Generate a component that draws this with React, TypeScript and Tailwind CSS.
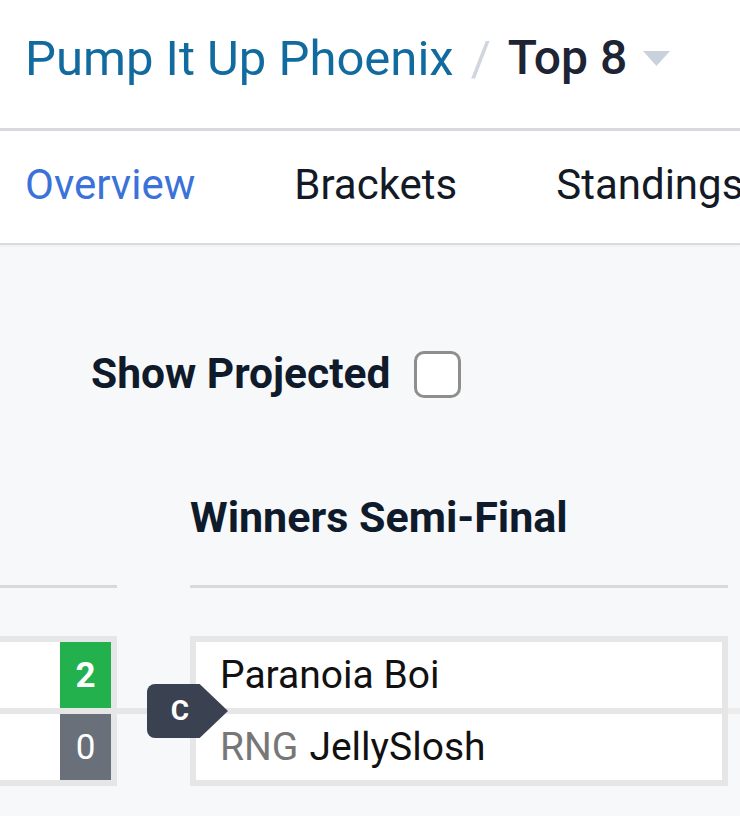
import React from "react";

const TABS = ["Overview", "Brackets", "Standings"];

function ScoreRow({ score, win }: { score: number; win: boolean }) {
  return (
    <div className="flex h-[66px]">
      <div className="flex-1 bg-white" />
      <div
        className={`w-[51px] flex items-center justify-center text-white text-[35px] leading-none ${
          win ? "bg-[#22b14c] font-bold" : "bg-[#6a707a]"
        }`}
      >
        {score}
      </div>
    </div>
  );
}

export default function App() {
  return (
    <div className="w-[740px] h-[816px] overflow-hidden bg-[#f7f8fa] font-['Roboto',sans-serif] antialiased">
      <header className="h-[131px] bg-white border-b-[3px] border-[#d7d9dc] flex items-center pl-[25px] pb-[12px] whitespace-nowrap">
        <span className="text-[49px] leading-none text-[#126b9f]">Pump It Up Phoenix</span>
        <span className="text-[49px] leading-none text-[#cfd6df] mx-[17px]">/</span>
        <span className="text-[48px] leading-none font-medium text-[#1e2433]">Top 8</span>
        <svg width="27" height="15" viewBox="0 0 27 15" className="ml-[16px]">
          <path d="M0 0 H27 L13.5 15 Z" fill="#c9d1dd" />
        </svg>
      </header>

      <nav className="h-[114px] bg-white border-b-[2px] border-[#d9dbde] shadow-[0_1px_2px_rgba(0,0,0,0.05)] flex items-center pl-[25px] pb-[5px] gap-[99px] whitespace-nowrap">
        {TABS.map((t, i) => (
          <span
            key={t}
            className={`text-[42px] leading-none ${i === 0 ? "text-[#3b72d9]" : "text-[#141a25]"}`}
          >
            {t}
          </span>
        ))}
      </nav>

      <main className="pt-[106px]">
        <div className="flex items-center pl-[91px] h-[47px]">
          <span className="text-[42.5px] leading-none font-bold text-[#0f1a2a]">Show Projected</span>
          <div className="ml-[24px] w-[47px] h-[47px] rounded-[10px] border-[3px] border-[#8e8e8e] bg-white" />
        </div>

        {/* round headings */}
        <div className="mt-[98px] flex">
          <div className="w-[117px] h-[92px] border-b-[3px] border-[#d9d9db]" />
          <div className="ml-[73px] w-[538px] border-b-[3px] border-[#d9d9db] pb-[46px]">
            <h2 className="text-[43px] leading-none font-bold text-[#0f1a2a] whitespace-nowrap">
              Winners Semi-Final
            </h2>
          </div>
        </div>

        {/* matches */}
        <div className="mt-[48px] flex items-center">
          <div className="w-[117px] border-y-[6px] border-r-[6px] border-[#e6e6e6] bg-[#e6e6e6] flex flex-col gap-[6px]">
            <ScoreRow score={2} win />
            <ScoreRow score={0} win={false} />
          </div>
          <div className="w-[73px] h-[6px] bg-[#e6e6e6]" />
          <div className="relative w-[538px]">
            <div className="border-[6px] border-[#e6e6e6] bg-[#e6e6e6] flex flex-col gap-[6px] text-[39px] leading-none text-[#111]">
              <div className="h-[66px] bg-white flex items-center pl-[24px]">Paranoia Boi</div>
              <div className="h-[66px] bg-white flex items-center pl-[24px]">
                <span className="text-[#777]">RNG</span>
                <span className="ml-[11px]">JellySlosh</span>
              </div>
            </div>
            <div className="absolute left-[-43px] top-[48px] w-[81px] h-[54px] bg-[#3a4150] rounded-l-[8px] [clip-path:polygon(0_0,65%_0,100%_50%,65%_100%,0_100%)] flex items-center">
              <span className="w-[66px] text-center text-white font-bold text-[28px] leading-none">C</span>
            </div>
          </div>
          <div className="flex-1 h-[6px] bg-[#ececec]" />
        </div>
      </main>
    </div>
  );
}
